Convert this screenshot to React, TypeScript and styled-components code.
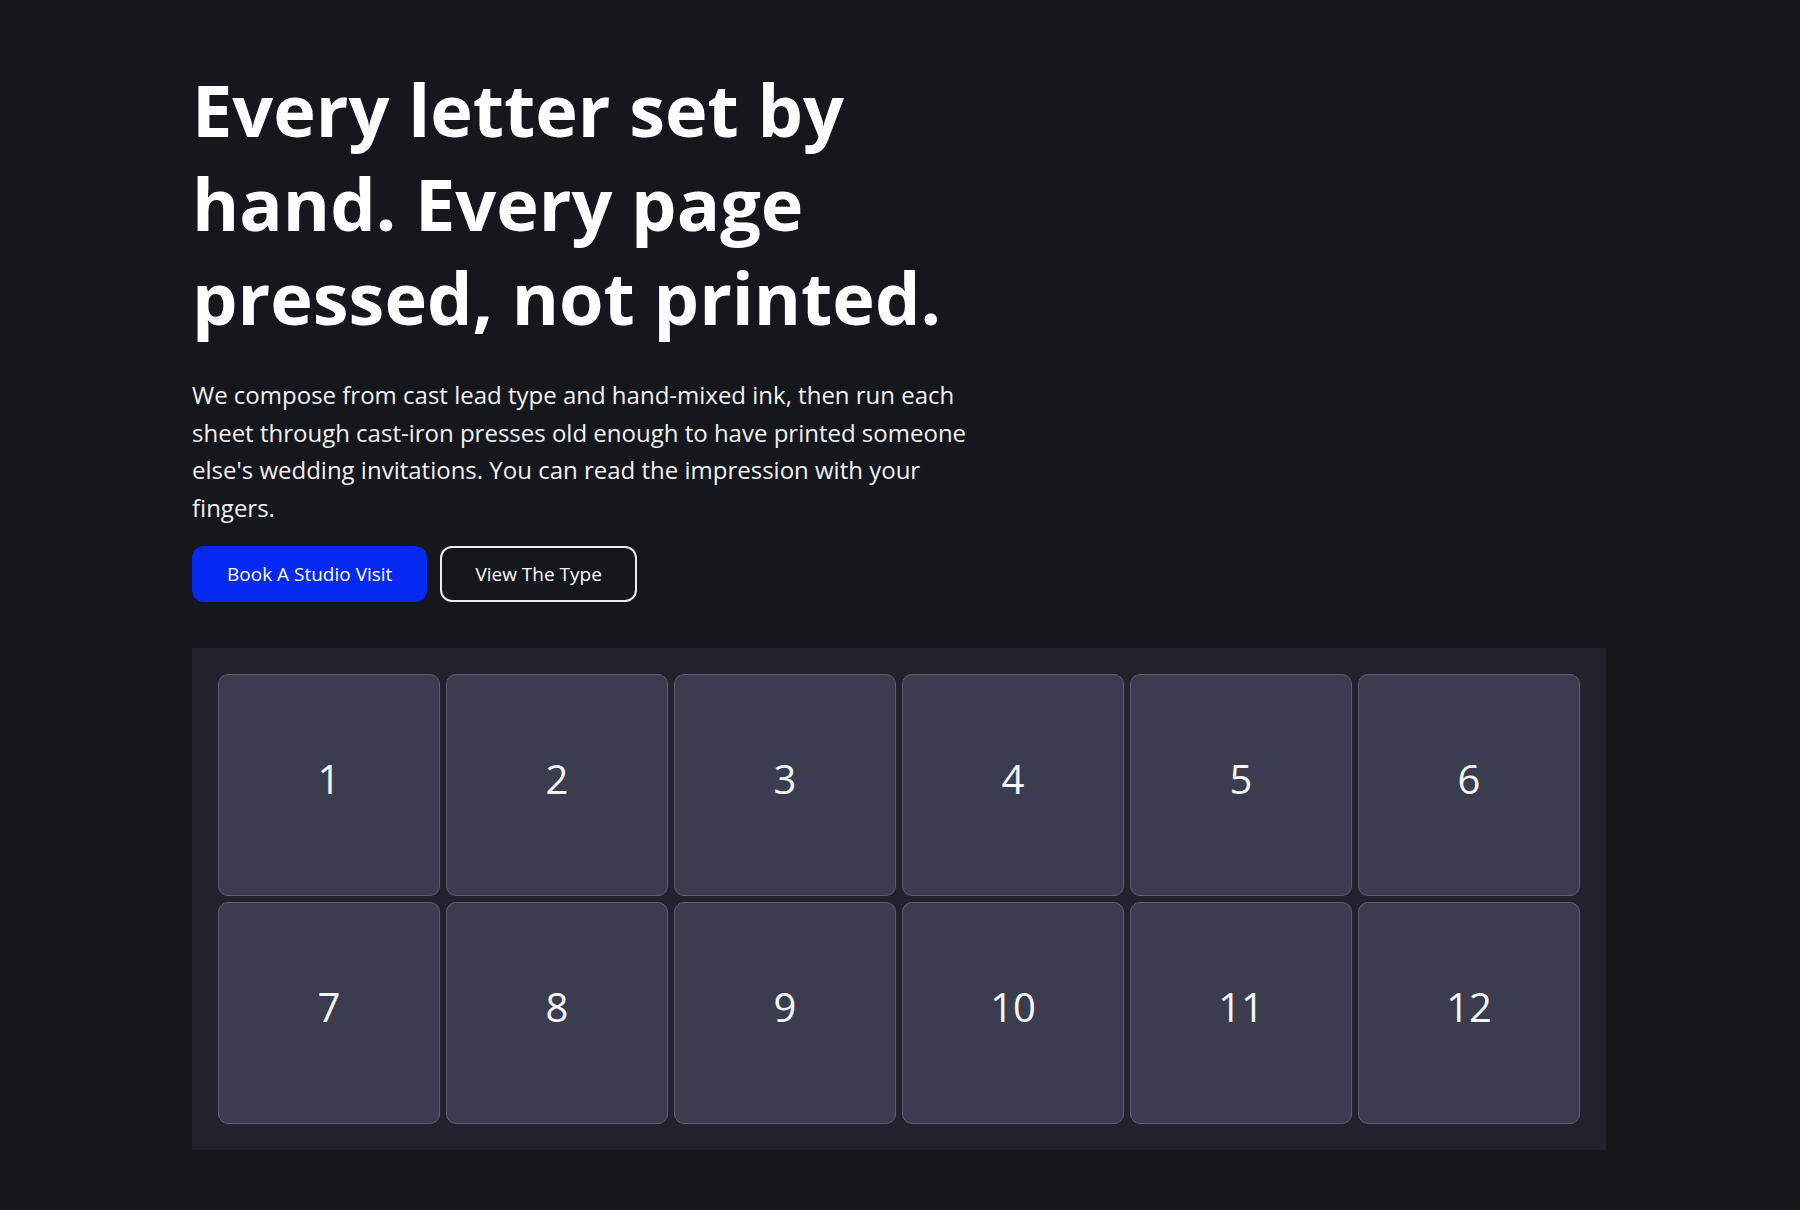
import React from "react";
import styled, { createGlobalStyle } from "styled-components";

const GlobalStyle = createGlobalStyle`
  html, body {
    margin: 0;
    padding: 0;
    background: #16171d;
  }
  body {
    font-family: "Open Sans", "Noto Sans", sans-serif;
    color: #ffffff;
    -webkit-font-smoothing: antialiased;
  }
`;

const Page = styled.main`
  box-sizing: border-box;
  width: 100%;
  padding: 62px 194px 61px 192px;
  display: flex;
  flex-direction: column;
`;

const Hero = styled.section`
  display: flex;
  flex-direction: column;
  align-items: flex-start;
`;

const Title = styled.h1`
  margin: 0;
  max-width: 800px;
  font-size: 72px;
  line-height: 94px;
  font-weight: 700;
  letter-spacing: 0;
  color: #ffffff;
`;

const Lead = styled.p`
  margin: 32px 0 0;
  max-width: 800px;
  font-size: 24px;
  line-height: 37.6px;
  font-weight: 400;
  color: #f1f1f4;
`;

const Actions = styled.div`
  display: flex;
  gap: 13px;
  margin-top: 20px;
`;

const Button = styled.button<{ $variant: "primary" | "outline" }>`
  height: 56px;
  padding: 0 33px;
  border-radius: 12px;
  font-family: "Open Sans", "Noto Sans", sans-serif;
  font-size: 19px;
  font-weight: 400;
  color: #ffffff;
  cursor: pointer;
  background: ${(p) => (p.$variant === "primary" ? "#0629f2" : "transparent")};
  border: 2px solid ${(p) => (p.$variant === "primary" ? "#0629f2" : "#ececf0")};
`;

const Board = styled.section`
  margin-top: 46px;
  background: #21232c;
  padding: 26px;
  display: grid;
  grid-template-columns: repeat(6, 1fr);
  gap: 6px;
`;

const Tile = styled.div`
  box-sizing: border-box;
  aspect-ratio: 1 / 1;
  padding-bottom: 14px;
  display: flex;
  align-items: center;
  justify-content: center;
  background: #3b3d4f;
  border: 1px solid #5d6073;
  border-radius: 10px;
  font-size: 40px;
  font-weight: 400;
  color: #f5f5f8;
`;

const tiles = Array.from({ length: 12 }, (_, i) => i + 1);

export default function App() {
  return (
    <>
      <GlobalStyle />
      <Page>
        <Hero>
          <Title>Every letter set by hand. Every page pressed, not printed.</Title>
          <Lead>
            We compose from cast lead type and hand-mixed ink, then run each sheet
            through cast-iron presses old enough to have printed someone else's wedding
            invitations. You can read the impression with your fingers.
          </Lead>
          <Actions>
            <Button $variant="primary">Book A Studio Visit</Button>
            <Button $variant="outline">View The Type</Button>
          </Actions>
        </Hero>
        <Board>
          {tiles.map((n) => (
            <Tile key={n}>{n}</Tile>
          ))}
        </Board>
      </Page>
    </>
  );
}
